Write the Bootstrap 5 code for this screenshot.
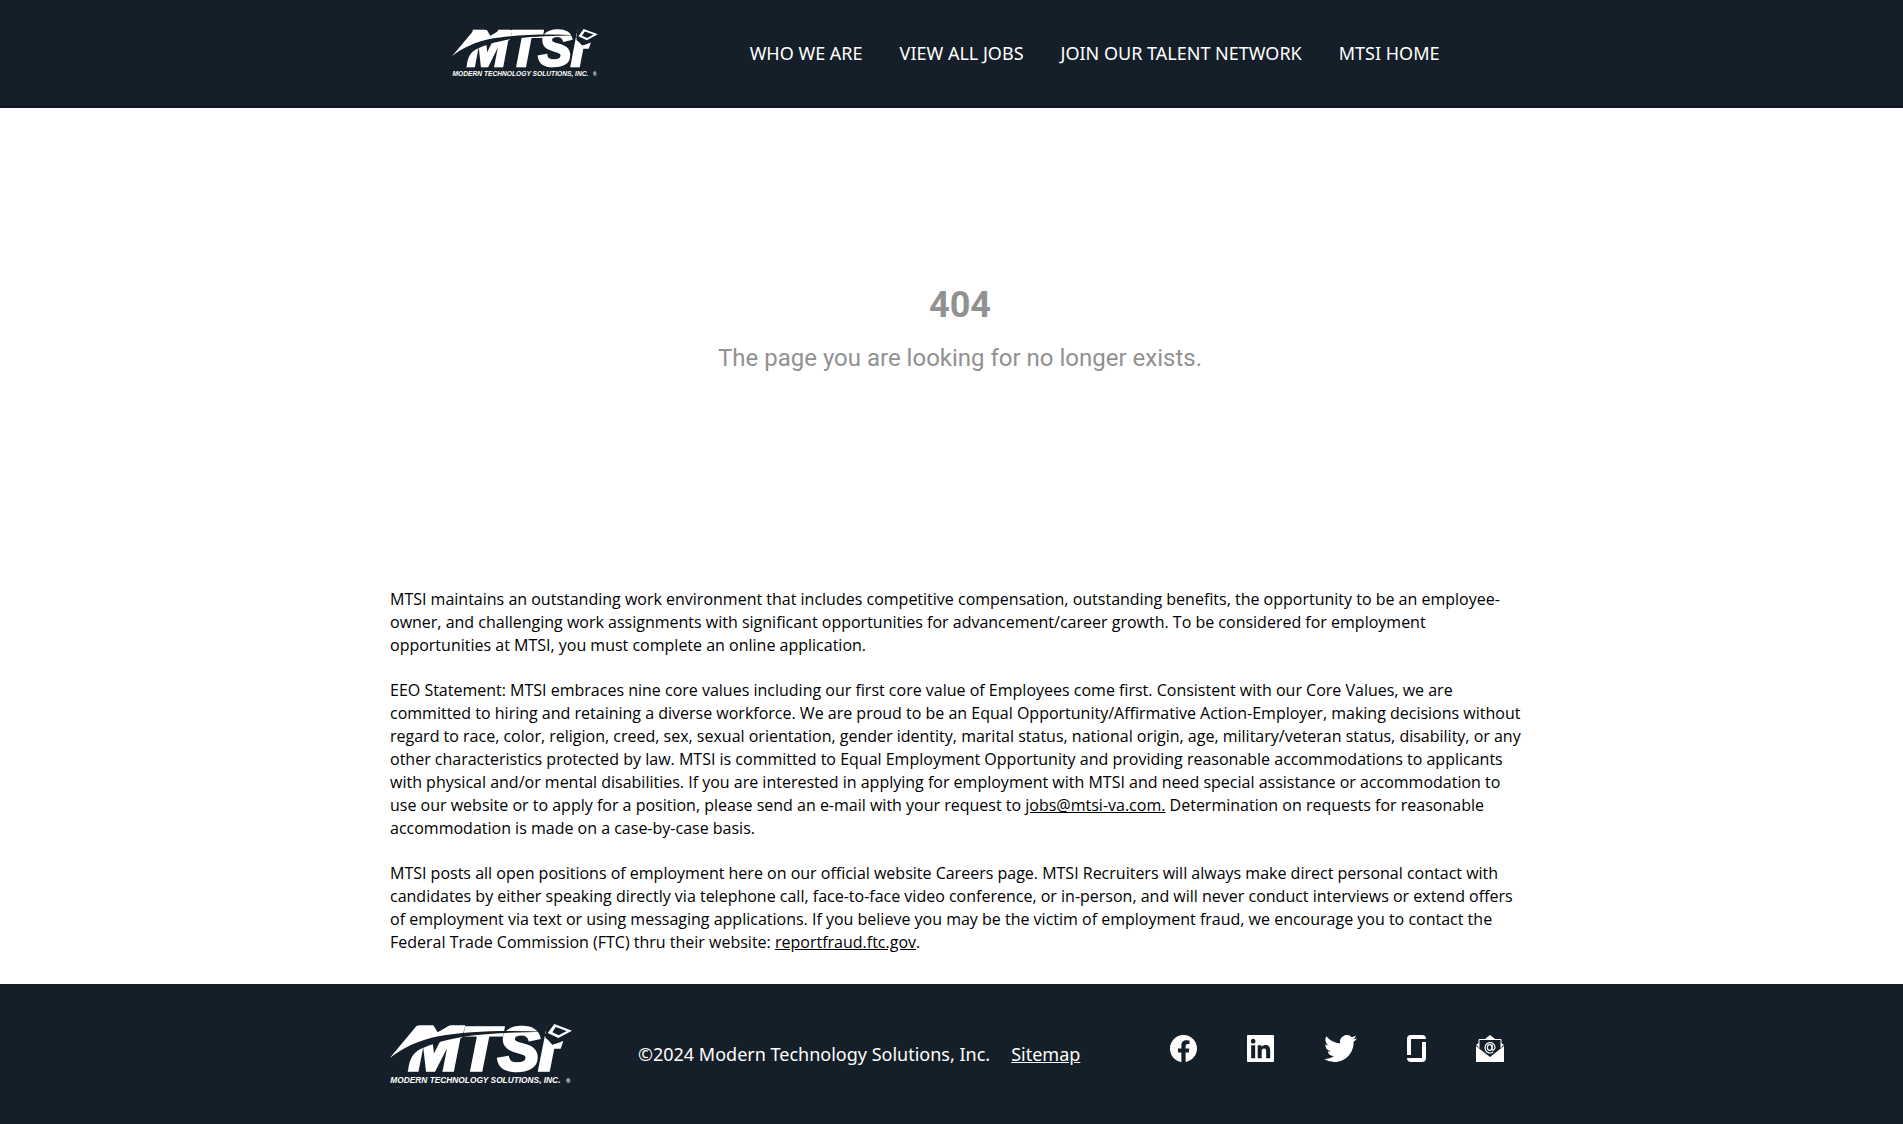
<!DOCTYPE html>
<html lang="en">
<head>
<meta charset="utf-8">
<meta name="viewport" content="width=device-width, initial-scale=1">
<title>404 | MTSI Careers</title>
<link href="https://cdn.jsdelivr.net/npm/bootstrap@5.3.0/dist/css/bootstrap.min.css" rel="stylesheet">
<style>
  body { font-family: "Open Sans", sans-serif; color: #000; }
  .site-bar { background: #151f29; color: #fff; font-family: "Noto Sans", sans-serif; font-size: 18px; line-height: 26px; }
  .site-bar a { color: #fff; }
  .top-bar { border-bottom: 2px solid #0f1720; padding: 29px 0; }
  .top-inner { max-width: 1000px; }
  .top-logo { width: 146px; height: 48px; }
  .top-nav { gap: 37px; margin-right: 12px; }
  .wide-inner { max-width: 1155px; }
  .missing { font-family: Roboto, sans-serif; color: #919191; padding: 177px 0 213px 17px; }
  .missing h1 { font-size: 36px; line-height: 40px; margin-bottom: 16px; }
  .missing p { font-size: 24px; line-height: 34px; margin: 0; }
  .legal { font-size: 16px; line-height: 23px; padding-bottom: 30px; }
  .legal p { margin-bottom: 22px; }
  .legal p:last-child { margin-bottom: 0; }
  .legal a { color: #000; }
  .foot-logo { width: 182px; height: 60px; }
  .foot-bar { padding: 40px 0; }
  .foot-copy { gap: 21px; margin-left: 66px; }
  .foot-icons { gap: 50px; margin: 11px 25px 0 auto; }
  .foot-icons svg { display: block; height: 27px; fill: #fff; }
</style>
<script src="https://cdn.jsdelivr.net/npm/bootstrap@5.3.0/dist/js/bootstrap.bundle.min.js" defer></script>
</head>
<body class="d-flex flex-column min-vh-100">
<svg class="d-none" xmlns="http://www.w3.org/2000/svg">
  <symbol id="logo" viewBox="60 71 546 180">
    <g font-family="Liberation Sans, sans-serif" font-weight="700" font-style="italic" fill="#fff">
      <g font-size="186" stroke="#fff" stroke-width="10">
        <text x="114" y="208">M</text>
        <text x="272" y="208">T</text>
        <text x="384" y="208">S</text>
        <text x="506" y="208">i</text>
      </g>
      <text x="61" y="249" font-size="25">MODERN TECHNOLOGY SOLUTIONS, INC.</text>
      <text x="588" y="249" font-size="18" font-style="normal">®</text>
    </g>
    <!-- wing, the arc that cuts the letters, and the diamond over the i -->
    <path fill="#fff" d="M60 172L137 80Q141 75 148 75H190L203 96L240 75H286L276 112L182 128L120 150Z"/>
    <path fill="#151f29" d="M60 173C98 142 150 119 205 108C290 92 410 89 528 94C440 96 370 98 300 106C235 115 180 132 150 147C130 158 117 176 114 214H60Z"/>
    <path fill="#151f29" d="M530 62H606V121H580L547 134L535 120L526 112Z"/>
    <path fill="#fff" fill-rule="evenodd" d="M533 98L553 71L606 91L565 113ZM547 96L566 105L590 92L557 80Z"/>
    <path fill="#fff" d="M535 121L547 134L580 122L572 145H527Z"/>
  </symbol>
</svg>
<header class="site-bar top-bar">
  <div class="container-fluid top-inner d-flex align-items-center justify-content-between px-0">
    <a href="#" aria-label="MTSI"><svg class="top-logo d-block"><use href="#logo"/></svg></a>
    <nav class="top-nav d-flex"><a class="text-decoration-none" href="#">WHO WE ARE</a><a class="text-decoration-none" href="#">VIEW ALL JOBS</a><a class="text-decoration-none" href="#">JOIN OUR TALENT NETWORK</a><a class="text-decoration-none" href="#">MTSI HOME</a></nav>
  </div>
</header>
<main>
  <section class="missing text-center"><h1 class="fw-bold">404</h1><p>The page you are looking for no longer exists.</p></section>
  <section class="legal container-fluid wide-inner ps-3 pe-0">
    <p>MTSI maintains an outstanding work environment that includes competitive compensation, outstanding benefits, the opportunity to be an employee-owner, and challenging work assignments with significant opportunities for advancement/career growth. To be considered for employment opportunities at MTSI, you must complete an online application.</p>
    <p>EEO Statement: MTSI embraces nine core values including our first core value of Employees come first. Consistent with our Core Values, we are committed to hiring and retaining a diverse workforce. We are proud to be an Equal Opportunity/Affirmative Action-Employer, making decisions without regard to race, color, religion, creed, sex, sexual orientation, gender identity, marital status, national origin, age, military/veteran status, disability, or any other characteristics protected by law. MTSI is committed to Equal Employment Opportunity and providing reasonable accommodations to applicants with physical and/or mental disabilities. If you are interested in applying for employment with MTSI and need special assistance or accommodation to use our website or to apply for a position, please send an e-mail with your request to <a href="#">jobs@mtsi-va.com.</a> Determination on requests for reasonable accommodation is made on a case-by-case basis.</p>
    <p>MTSI posts all open positions of employment here on our official website Careers page. MTSI Recruiters will always make direct personal contact with candidates by either speaking directly via telephone call, face-to-face video conference, or in-person, and will never conduct interviews or extend offers of employment via text or using messaging applications. If you believe you may be the victim of employment fraud, we encourage you to contact the Federal Trade Commission (FTC) thru their website: <a href="#">reportfraud.ftc.gov</a>.</p>
  </section>
</main>
<footer class="site-bar foot-bar flex-grow-1">
  <div class="container-fluid wide-inner d-flex ps-3 pe-0">
    <a href="#" aria-label="MTSI"><svg class="foot-logo d-block"><use href="#logo"/></svg></a>
    <div class="foot-copy d-flex align-self-center"><span>©2024 Modern Technology Solutions, Inc.</span><a href="#">Sitemap</a></div>
    <div class="foot-icons d-flex align-self-start">
      <a href="#" aria-label="Facebook"><svg width="27" viewBox="0 0 16 16"><path d="M16 8.049c0-4.446-3.582-8.05-8-8.05C3.58 0-.002 3.603-.002 8.05c0 4.017 2.926 7.347 6.75 7.951v-5.625h-2.03V8.05H6.75V6.275c0-2.017 1.195-3.131 3.022-3.131.876 0 1.791.157 1.791.157v1.98h-1.009c-.993 0-1.303.621-1.303 1.258v1.51h2.218l-.354 2.326H9.25V16c3.824-.604 6.75-3.934 6.75-7.951z"/></svg></a>
      <a href="#" aria-label="LinkedIn"><svg width="27" viewBox="0 32 448 448"><path d="M432 32H16Q0 32 0 48V464Q0 480 16 480H432Q448 480 448 464V48Q448 32 432 32zM135.400 416H69V202.200h66.500V416zm-33.200-243c-21.300 0-38.500-17.300-38.500-38.500S80.900 96 102.200 96c21.200 0 38.500 17.300 38.500 38.500 0 21.300-17.200 38.500-38.500 38.500zm282.100 243h-66.400V312c0-24.800-.5-56.700-34.500-56.700-34.600 0-39.900 27-39.900 54.900V416h-66.400V202.200h63.700v29.200h.9c8.900-16.800 30.600-34.500 62.900-34.500 67.200 0 79.700 44.300 79.700 101.900V416z"/></svg></a>
      <a href="#" aria-label="Twitter"><svg width="33" viewBox="0 1.500 16 13"><path d="M5.026 14.500c6.038 0 9.341-5.003 9.341-9.334 0-.14 0-.282-.006-.422A6.685 6.685 0 0 0 16 3.042a6.658 6.658 0 0 1-1.889.518 3.301 3.301 0 0 0 1.447-1.817 6.533 6.533 0 0 1-2.087.793A3.286 3.286 0 0 0 7.875 5.530a9.325 9.325 0 0 1-6.767-3.429 3.289 3.289 0 0 0 1.018 4.382A3.323 3.323 0 0 1 .64 6.073v.045a3.288 3.288 0 0 0 2.632 3.218 3.203 3.203 0 0 1-.865.115 3.230 3.230 0 0 1-.614-.057 3.283 3.283 0 0 0 3.067 2.277A6.588 6.588 0 0 1 .780 13.080a6.320 6.320 0 0 1-.780-.045A9.344 9.344 0 0 0 5.026 14.500z"/></svg></a>
      <a href="#" aria-label="Glassdoor"><svg width="19" viewBox="0 0 19 27"><path d="M0 20V4Q0 0 4 0H15Q19 0 19 4H4V20ZM15 7H19V23Q19 27 15 27H4Q0 27 0 23H15Z"/></svg></a>
      <a href="#" aria-label="Email"><svg width="28" viewBox="0 0 28 27"><path d="M9 4L14 0L19 4ZM0 11L14 22L28 11V27H0ZM0 10L3 8V12ZM28 10L25 8V12Z"/><path d="M3 13V4.500H25V13" fill="none" stroke="#fff" stroke-width="1"/><g fill="none" stroke="#fff" stroke-width="1.200"><ellipse cx="13.700" cy="12.500" rx="2.300" ry="2.800"/><path d="M16.400 9.500L15.900 14Q16.200 15.600 17.500 15Q19 14 19 12A5 5.200 0 1 0 17 17"/></g></svg></a>
    </div>
  </div>
</footer>
</body>
</html>
